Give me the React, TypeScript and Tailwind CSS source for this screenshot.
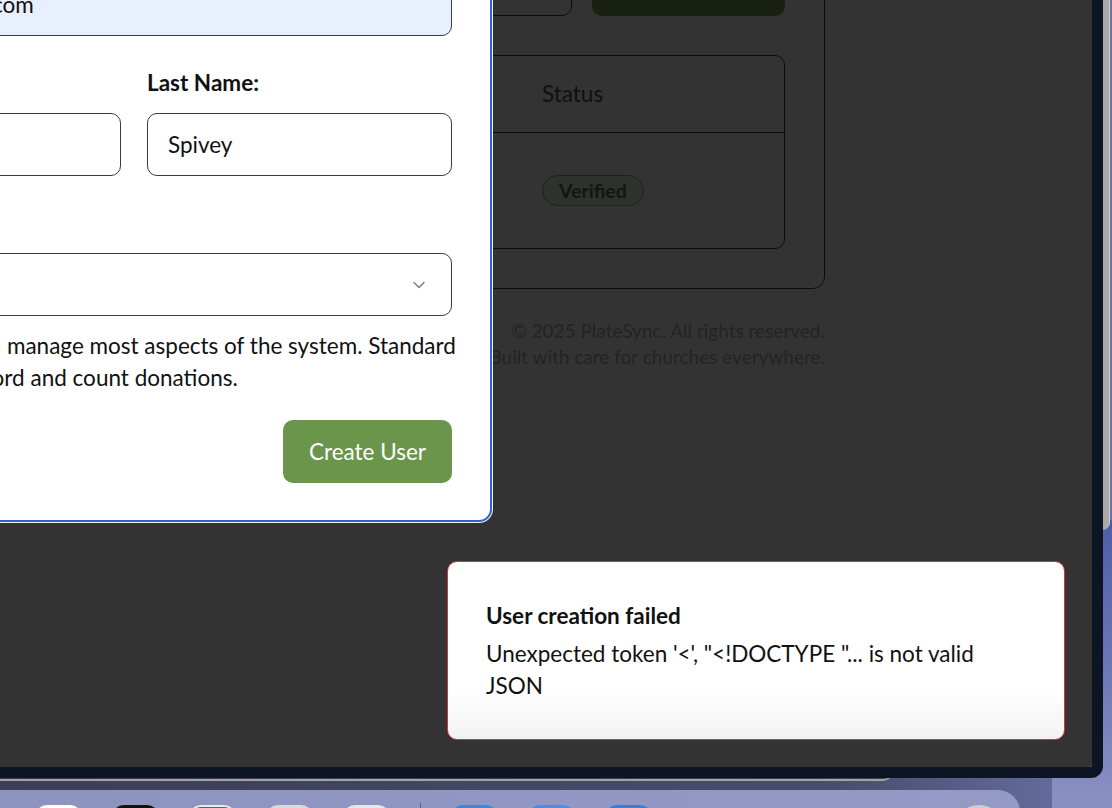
import { ChevronDown } from "lucide-react";

const inputBox =
  "flex h-[63px] items-center rounded-[10px] border border-[#3c3c3c] px-[20px] text-[22.5px] text-[#111]";

const labelText = "block text-[22.5px] font-bold leading-[28px] text-[#111]";

function DockIcon({ className }: { className: string }) {
  return <div className={`h-[47px] w-[47px] shrink-0 rounded-[12px] ${className}`} />;
}

function Dock() {
  return (
    <div className="absolute left-[-60px] top-[790px] flex h-[80px] w-[1080px] items-start gap-[30px] rounded-tr-[22px] bg-[linear-gradient(90deg,#8c93bf,#959ac5)] pl-[18px] pr-[17px] pt-[15px]">
      <DockIcon className="bg-[#3d8be0]" />
      <DockIcon className="bg-white" />
      <DockIcon className="bg-[#111]" />
      <DockIcon className="border-2 border-[#e8ecef] bg-[#5b6265]" />
      <DockIcon className="bg-[#d9dadd]" />
      <DockIcon className="bg-[#e3e6ea]" />
      <div className="mt-[-2px] h-[20px] w-px shrink-0 bg-[#5b6088]" />
      <DockIcon className="bg-[#3f86d8]" />
      <DockIcon className="bg-[#4b8fe0]" />
      <DockIcon className="bg-[#3a7ed4]" />
      <div className="ml-auto h-[47px] w-[48px] shrink-0 rounded-full bg-[#c9ccd6]" />
    </div>
  );
}

function Page() {
  return (
    <div className="mt-[-80px] pl-[100px]">
      <section className="w-[725px] rounded-[12px] border border-[#3a3a3a] bg-white p-[39px]">
        <div className="flex gap-[20px]">
          <div className="h-[56px] flex-1 rounded-[10px] border border-[#3a3a3a]" />
          <button className="h-[56px] w-[193px] rounded-[10px] bg-[#7aa35c] text-[22px] text-white">
            Add User
          </button>
        </div>

        <div className="mt-[39px] overflow-hidden rounded-[10px] border border-[#3a3a3a]">
          <div className="flex h-[77px] items-center border-b border-[#3a3a3a] text-[22.5px] text-[#555]">
            <div className="flex-1 px-6">Name</div>
            <div className="flex-1 px-6">Role</div>
            <div className="w-[266px] px-6">Status</div>
          </div>
          <div className="flex h-[115px] items-center text-[20px] text-[#555]">
            <div className="flex-1 px-6">Jason Spivey</div>
            <div className="flex-1 px-6">Admin</div>
            <div className="w-[266px] px-6">
              <span className="inline-flex h-[31px] items-center rounded-full border border-[#86ad80] bg-[#e6f3e2] px-[16px] text-[19.5px] font-bold text-[#4b7a45]">
                Verified
              </span>
            </div>
          </div>
        </div>
      </section>

      <footer className="w-[725px] pt-[29px] text-right text-[19px] leading-[26px] text-[#b0b0b0]">
        <p>© 2025 PlateSync. All rights reserved.</p>
        <p>Built with care for churches everywhere.</p>
      </footer>
    </div>
  );
}

function CreateUserModal() {
  return (
    <div className="absolute bottom-[245px] left-[-224px] w-[716px] rounded-[13px] border-2 border-[#2f64d2] bg-white px-[38px] pb-[37px] pt-[30px] shadow-[0_0_0_1px_#f2f2f2]">
      <h2 className="text-[28px] font-bold leading-[36px] text-[#111]">Add New User</h2>

      <label className={`${labelText} mt-[24px]`}>Email:</label>
      <div className={`${inputBox} mt-[16px] bg-[#e8f0fe]`}>jaspivey@gmail.com</div>

      <div className="mt-[33px] grid grid-cols-2 gap-[26px]">
        <div>
          <label className={labelText}>First Name:</label>
          <div className={`${inputBox} mt-[16px]`}>Jason</div>
        </div>
        <div>
          <label className={labelText}>Last Name:</label>
          <div className={`${inputBox} mt-[16px]`}>Spivey</div>
        </div>
      </div>

      <label className={`${labelText} mt-[33px]`}>Role:</label>
      <div className={`${inputBox} mt-[16px] justify-between pr-[22px]`}>
        <span>Standard User</span>
        <ChevronDown className="h-[20px] w-[20px] text-[#7a7a7a]" strokeWidth={1.6} />
      </div>

      <p className="mr-[-10px] mt-[14px] text-[22.5px] leading-8 text-[#111]">
        Administrators can manage most aspects of the system. Standard users can only record and count donations.
      </p>

      <div className="mt-[26px] flex justify-end">
        <button className="h-[63px] w-[169px] rounded-[10px] bg-[#6a954b] text-[22.5px] text-white">
          Create User
        </button>
      </div>
    </div>
  );
}

function ErrorToast() {
  return (
    <div className="absolute bottom-[27px] right-[27px] h-[179px] w-[618px] rounded-[10px] border border-[#d8343c] bg-[linear-gradient(180deg,#ffffff_72%,#f2f2f2)] px-[38px] pt-[40px] text-[#111]">
      <div className="text-[22.5px] font-bold leading-[28px]">User creation failed</div>
      <div className="mt-[8px] w-[510px] text-[22.5px] leading-8">
        Unexpected token '&lt;', "&lt;!DOCTYPE "... is not valid JSON
      </div>
    </div>
  );
}

export default function App() {
  return (
    <div className="relative h-[808px] w-[1112px] overflow-hidden bg-[linear-gradient(90deg,#3a3e56_0%,#474d6c_75%,#6a73a9_100%)] [font-family:Lato,sans-serif]">
      <div className="absolute right-0 top-[520px] h-[288px] w-[60px] bg-[linear-gradient(180deg,#4d5ea6,#8a91c3)]" />
      <div className="absolute right-[2px] top-0 h-[530px] w-[30px] rounded-br-[8px] border-r border-[#cfcfcf] bg-[#a9a9a9]" />
      <div className="absolute left-0 top-0 h-[781px] w-[893px] rounded-br-[10px] border-b-2 border-[#a3a3a3] bg-[#3a3e56]" />

      <Dock />

      <div className="absolute left-0 top-0 h-[778px] w-[1103px] rounded-br-[12px] bg-[#0d1424] pb-[11px] pr-[11px]">
        <div className="relative h-full w-full overflow-hidden rounded-br-[3px] bg-white">
          <Page />
          <div className="absolute inset-0 bg-black/80" />
          <CreateUserModal />
          <ErrorToast />
        </div>
      </div>
    </div>
  );
}
